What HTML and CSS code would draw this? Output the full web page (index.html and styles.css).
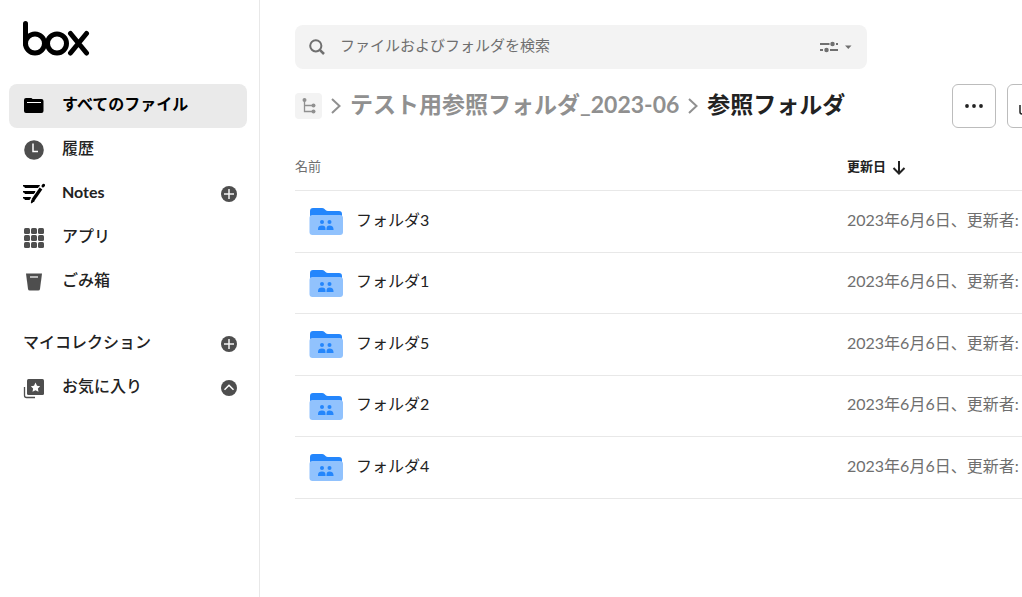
FILE: index.html
```html
<!DOCTYPE html>
<html lang="ja">
<head>
  <meta charset="utf-8">
  <meta name="viewport" content="width=device-width, initial-scale=1">
  <title>参照フォルダ | Box</title>
  <link rel="stylesheet" href="styles.css">
</head>
<body>
  <!-- Shared icons -->
  <svg width="0" height="0" class="sprite" aria-hidden="true">
    <symbol id="folder" viewBox="0 0 34 28">
      <path fill="#2486fc" d="M1 12V4a3 3 0 0 1 3-3h9q1.500 0 2.500 1l1 1q1 1 2.500 1h11a3 3 0 0 1 3 3v5z"/>
      <rect x="0.500" y="8" width="33.500" height="20" rx="3" fill="#91c2fd"/>
      <g fill="#2486fc">
        <circle cx="13" cy="15" r="2"/>
        <circle cx="20.500" cy="15" r="2"/>
        <path d="M9 23v-1c0-2.500 1.500-3.500 4-3.500s3.500 1 3.500 3.500v1z"/>
        <path d="M17.500 23v-1c0-2.500 1-3.500 3-3.500s4 1 4 3.500v1z"/>
      </g>
    </symbol>
    <symbol id="plus" viewBox="0 0 16 16">
      <circle cx="8" cy="8" r="8" fill="#4e4e4e"/>
      <path d="M8 3v10M3 8h10" stroke="#f4f4f4" stroke-width="1.500"/>
    </symbol>
    <symbol id="chevron" viewBox="0 0 10 16">
      <path d="M1 1l7.500 7L1 15" fill="none" stroke="#909090" stroke-width="2"/>
    </symbol>
  </svg>

  <div class="app">
    <aside class="sidebar">
      <a class="logo" href="#" aria-label="box">
        <svg width="68" height="36" viewBox="0 0 68 36" fill="none" stroke="#000" stroke-width="5" stroke-linecap="round">
          <path d="M3.500 3.500V24"/>
          <circle cx="13" cy="23.500" r="9.500"/>
          <circle cx="35" cy="23.500" r="9.500"/>
          <path d="M48.500 13.500L64.500 33M64.500 13.500L48.500 33"/>
        </svg>
      </a>

      <nav class="menu">
        <div class="menu-item active">
          <a href="#">
            <svg width="22" height="22" viewBox="0 0 22 22">
              <path d="M1 5a2 2 0 0 1 2-2h5q1 0 1.500 1h9a2 2 0 0 1 2 2v10a2 2 0 0 1-2 2H3a2 2 0 0 1-2-2z"/>
              <path d="M4 7.500h14" stroke="#fff"/>
            </svg>
            <span>すべてのファイル</span>
          </a>
        </div>
        <div class="menu-item">
          <a href="#">
            <svg width="22" height="22" viewBox="0 0 22 22">
              <circle cx="11" cy="11" r="9.800" fill="#4e4e4e"/>
              <path d="M10 4.500v8h5" fill="none" stroke="#fff" stroke-width="1.500"/>
            </svg>
            <span>履歴</span>
          </a>
        </div>
        <div class="menu-item notes">
          <a href="#">
            <svg width="22" height="22" viewBox="0 0 22 22" fill="none" stroke="#000">
              <path d="M0 2.500h16.500l-1.500 2H2zM0 8.500h12l-1.200 2H2zM0 14.500h7.500l-1 2H2z" fill="#000"/>
              <path d="M18 5.500L10 17" stroke-width="3.200"/>
              <path d="M9 16.500l-.7 3.500 3-2z" fill="#000"/>
              <path d="M20 3l.5-.7" stroke-width="3" stroke-linecap="round"/>
            </svg>
            <span>Notes</span>
          </a>
          <button type="button" class="round" aria-label="Notesを作成"><svg width="16" height="16"><use href="#plus"/></svg></button>
        </div>
        <div class="menu-item">
          <a href="#">
            <svg width="22" height="22" viewBox="0 0 22 22" fill="#4e4e4e">
              <rect x="1" y="1" width="6" height="6" rx="1.500"/>
              <rect x="8" y="1" width="6" height="6" rx="1.500"/>
              <rect x="15" y="1" width="6" height="6" rx="1.500"/>
              <rect x="1" y="8" width="6" height="6" rx="1.500"/>
              <rect x="8" y="8" width="6" height="6" rx="1.500"/>
              <rect x="15" y="8" width="6" height="6" rx="1.500"/>
              <rect x="1" y="15" width="6" height="6" rx="1.500"/>
              <rect x="8" y="15" width="6" height="6" rx="1.500"/>
              <rect x="15" y="15" width="6" height="6" rx="1.500"/>
            </svg>
            <span>アプリ</span>
          </a>
        </div>
        <div class="menu-item">
          <a href="#">
            <svg width="22" height="22" viewBox="0 0 22 22">
              <path d="M3 2.500h16l-2 15.500q-.2 1.500-1.800 1.500H6.800Q5.200 19.500 5 18z" fill="#4e4e4e"/>
              <path d="M7 6h8" stroke="#fff" stroke-width="1.200"/>
            </svg>
            <span>ごみ箱</span>
          </a>
        </div>
      </nav>

      <section class="menu">
        <div class="menu-item">
          <h2>マイコレクション</h2>
          <button type="button" class="round" aria-label="コレクションを追加"><svg width="16" height="16"><use href="#plus"/></svg></button>
        </div>
        <div class="menu-item">
          <a href="#">
            <svg width="22" height="22" viewBox="0 0 22 22">
              <rect x="4" y="2" width="17" height="16" rx="1.500" fill="#4e4e4e"/>
              <path d="M1.500 10v8.500q0 2 2 2H12" fill="none" stroke="#4e4e4e" stroke-width="1.300"/>
              <path d="M12.500 5.500l1.500 3.200 3.200.5-2.300 2.300.6 3.300-3-1.600-3 1.600.6-3.300-2.300-2.300 3.200-.5z" fill="#fff"/>
            </svg>
            <span>お気に入り</span>
          </a>
          <button type="button" class="round" aria-label="折りたたむ">
            <svg width="16" height="16" viewBox="0 0 16 16">
              <circle cx="8" cy="8" r="8" fill="#4e4e4e"/>
              <path d="M3.500 9.800L8 5.300l4.500 4.500" fill="none" stroke="#fff" stroke-width="1.500"/>
            </svg>
          </button>
        </div>
      </section>
    </aside>

    <main class="main">
      <form class="search" role="search">
        <svg width="16" height="16" viewBox="0 0 16 16" fill="none" stroke="#6f6f6f" stroke-width="2">
          <circle cx="6.800" cy="6.800" r="5.600"/>
          <path d="M10.800 10.800l4.200 4.200" stroke-width="2.500"/>
        </svg>
        <input type="search" aria-label="検索" placeholder="ファイルおよびフォルダを検索">
        <button type="button" class="filter" aria-label="検索フィルタ">
          <svg width="32" height="14" viewBox="0 0 32 14" fill="#6f6f6f" stroke="#6f6f6f" stroke-width="2">
            <path d="M0 4h9.500M16 4h2M0 10h3M10 10h8"/>
            <circle cx="12.500" cy="4" r="1.500" stroke-width="1.500"/>
            <circle cx="6.500" cy="10" r="1.500" stroke-width="1.500"/>
            <path d="M25 5.500h6.500L28.300 9z" stroke="none"/>
          </svg>
        </button>
      </form>

      <header class="header">
        <nav class="breadcrumb" aria-label="パス">
          <button type="button" class="tree" aria-label="上位フォルダ">
            <svg width="16" height="18" viewBox="0 0 16 18" fill="#909090">
              <path d="M3.500 3v11.500H13M3.500 8.500H13" fill="none" stroke="#909090" stroke-width="1.300"/>
              <circle cx="3.500" cy="3" r="2"/>
              <circle cx="12.500" cy="8.500" r="2"/>
              <circle cx="12.500" cy="14.500" r="2"/>
            </svg>
          </button>
          <svg width="10" height="16"><use href="#chevron"/></svg>
          <a href="#">テスト用参照フォルダ_2023-06</a>
          <svg width="10" height="16"><use href="#chevron"/></svg>
          <h1>参照フォルダ</h1>
        </nav>
        <div class="actions">
          <button type="button" aria-label="その他のオプション">
            <svg width="18" height="4" viewBox="0 0 18 4" fill="#222">
              <circle cx="2" cy="2" r="1.900"/>
              <circle cx="9" cy="2" r="1.900"/>
              <circle cx="16" cy="2" r="1.900"/>
            </svg>
          </button>
          <button type="button" aria-label="アップロード">
            <svg width="20" height="20" viewBox="0 0 20 20" fill="none" stroke="#222" stroke-width="1.500">
              <path d="M1 9v7q0 2 2 2h14q2 0 2-2V9M10 14V2M5 7l5-5 5 5"/>
            </svg>
          </button>
        </div>
      </header>

      <table class="files">
        <thead>
          <tr>
            <th scope="col" class="name">名前</th>
            <th scope="col" class="updated">
              更新日
              <svg width="14" height="14" viewBox="0 0 14 14" fill="none" stroke="#222" stroke-width="2"><path d="M7 0v12M1.500 7L7 12.500 12.500 7"/></svg>
            </th>
          </tr>
        </thead>
        <tbody>
          <tr>
            <td><a href="#"><svg width="34" height="28"><use href="#folder"/></svg>フォルダ3</a></td>
            <td>2023年6月6日、更新者:</td>
          </tr>
          <tr>
            <td><a href="#"><svg width="34" height="28"><use href="#folder"/></svg>フォルダ1</a></td>
            <td>2023年6月6日、更新者:</td>
          </tr>
          <tr>
            <td><a href="#"><svg width="34" height="28"><use href="#folder"/></svg>フォルダ5</a></td>
            <td>2023年6月6日、更新者:</td>
          </tr>
          <tr>
            <td><a href="#"><svg width="34" height="28"><use href="#folder"/></svg>フォルダ2</a></td>
            <td>2023年6月6日、更新者:</td>
          </tr>
          <tr>
            <td><a href="#"><svg width="34" height="28"><use href="#folder"/></svg>フォルダ4</a></td>
            <td>2023年6月6日、更新者:</td>
          </tr>
        </tbody>
      </table>
    </main>
  </div>
</body>
</html>
```
FILE: styles.css
```css
* { box-sizing: border-box; }

body {
  margin: 0;
  font-family: Lato, "Noto Sans CJK JP", sans-serif;
  font-size: 16px;
  color: #222;
  background: #fff;
}
a { color: inherit; text-decoration: none; }
button {
  padding: 0;
  border: 0;
  background: none;
  cursor: pointer;
}
svg { display: block; flex: none; }
.sprite { position: absolute; }

.app {
  display: flex;
  min-height: 100vh;
}

/* Sidebar */
.sidebar {
  flex: 0 0 260px;
  padding: 20px 12px 20px 9px;
  border-right: 1px solid #e8e8e8;
}
.logo {
  display: block;
  padding: 0 0 28px 13px;
}
.menu { margin-bottom: 18px; }
.menu-item {
  display: flex;
  align-items: center;
  height: 44px;
  padding: 0 10px 0 14px;
  border-radius: 8px;
  font-weight: 500;
}
.menu-item a {
  display: flex;
  flex: 1;
  align-items: center;
  gap: 17px;
}
.menu-item span,
.menu-item h2 {
  padding-bottom: 5px;
  line-height: 20px;
}
.menu-item h2 {
  flex: 1;
  margin: 0;
  font-size: 16px;
  font-weight: 500;
}
.menu-item.active {
  background: #eaeaea;
  color: #000;
  font-weight: 700;
}
.menu-item.notes { font-weight: 700; }
.menu-item:hover { background: #eaeaea; }

/* Main */
.main {
  flex: 1;
  min-width: 0;
  padding: 25px 0 20px 35px;
  overflow: hidden;
}
.search {
  display: flex;
  align-items: center;
  gap: 15px;
  max-width: 572px;
  height: 44px;
  padding: 0 15px 0 14px;
  border-radius: 8px;
  background: #f3f3f3;
}
.search input {
  flex: 1;
  min-width: 0;
  padding: 0 0 4px;
  border: 0;
  outline: none;
  background: none;
  font-family: inherit;
  font-size: 15px;
  color: #222;
}
.search input::placeholder {
  color: #6f6f6f;
  opacity: 1;
}

.header {
  display: flex;
  align-items: center;
  justify-content: space-between;
  margin-top: 15px;
}
.breadcrumb {
  display: flex;
  align-items: center;
  gap: 9px;
  font-size: 23px;
  font-weight: 700;
  line-height: 28px;
  white-space: nowrap;
}
.breadcrumb a {
  padding-bottom: 5px;
  color: #909090;
}
.breadcrumb h1 {
  margin: 0;
  padding-bottom: 5px;
  font-size: 23px;
}
.tree {
  display: flex;
  align-items: center;
  justify-content: center;
  width: 27px;
  height: 26px;
  border-radius: 4px;
  background: #f3f3f3;
}
/* the toolbar runs on past the right edge */
.actions {
  display: flex;
  gap: 11px;
  margin-right: -29px;
}
.actions button {
  display: flex;
  align-items: center;
  justify-content: center;
  width: 44px;
  height: 44px;
  border: 1px solid #bcbcbc;
  border-radius: 6px;
}

/* File list */
.files {
  width: 100%;
  margin-top: 14px;
  border-collapse: collapse;
  table-layout: fixed;
  white-space: nowrap;
}
.files th {
  height: 48px;
  padding: 0;
  border-bottom: 1px solid #e8e8e8;
  font-size: 13px;
  text-align: left;
}
.files .name {
  font-weight: 400;
  color: #6f6f6f;
}
.files .updated { width: 175px; }
.files th svg {
  display: inline-block;
  margin-left: 3px;
  vertical-align: middle;
}
.files td {
  height: 61px;
  padding: 0 0 5px;
  border-bottom: 1px solid #e8e8e8;
  color: #6f6f6f;
}
.files tr:nth-child(odd) td { height: 62px; }
.files td a {
  display: flex;
  align-items: center;
  gap: 13px;
  padding-left: 14px;
  color: #222;
}
.files td svg { margin-top: 5px; }
```
